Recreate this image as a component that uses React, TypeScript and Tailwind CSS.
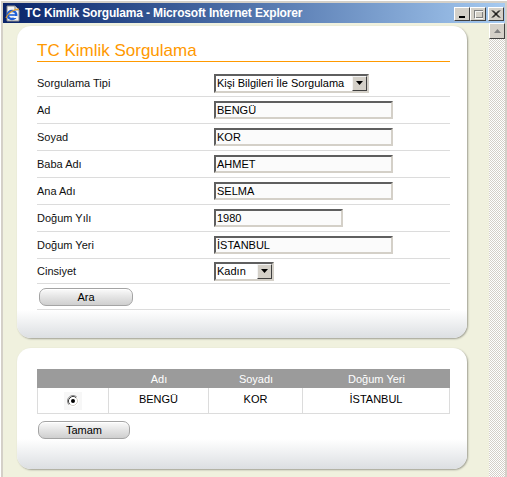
import React from "react";

function IEIcon() {
  return (
    <svg width="16" height="17" viewBox="0 0 16 17" className="shrink-0">
      <path d="M2 1h8l4 4v11H2z" fill="#f4f4f4" stroke="#8a8a8a" strokeWidth="1" />
      <path d="M10 1v4h4" fill="#dcdcdc" stroke="#8a8a8a" strokeWidth="1" />
      <ellipse cx="7" cy="10" rx="4.3" ry="4" fill="none" stroke="#1f5fd6" strokeWidth="2.4" />
      <rect x="3" y="9.2" width="8.5" height="1.6" fill="#1f5fd6" />
      <rect x="8.5" y="11" width="4" height="2" fill="#f4f4f4" />
      <path d="M1 13c2-5 8-9 13-9" fill="none" stroke="#f0a020" strokeWidth="1.2" />
    </svg>
  );
}

function WinBtn({ kind }: { kind: "min" | "max" | "close" }) {
  return (
    <div className="w-[16px] h-[14px] bg-[#d4d0c8] border border-t-white border-l-white border-b-[#404040] border-r-[#404040] flex items-center justify-center">
      {kind === "min" && (
        <svg width="10" height="9" viewBox="0 0 10 9">
          <rect x="2" y="6" width="6" height="2" fill="#000" />
        </svg>
      )}
      {kind === "max" && (
        <svg width="10" height="9" viewBox="0 0 10 9">
          <rect x="1.5" y="0.5" width="8" height="7" fill="none" stroke="#808080" />
          <rect x="1" y="1" width="9" height="1" fill="#808080" />
          <rect x="2.5" y="1.5" width="8" height="7" fill="none" stroke="#ffffff" strokeOpacity="0.9" />
        </svg>
      )}
      {kind === "close" && (
        <svg width="10" height="9" viewBox="0 0 10 9">
          <path d="M1 0.5L8 7.5M2 0.5L9 7.5M8 0.5L1 7.5M9 0.5L2 7.5" stroke="#000" strokeWidth="1" />
        </svg>
      )}
    </div>
  );
}

function Arrow() {
  return (
    <svg width="7" height="4" viewBox="0 0 7 4">
      <path d="M0 0h7L3.5 4z" fill="#000" />
    </svg>
  );
}

function Select({ value, w }: { value: string; w: string }) {
  return (
    <div
      className={`${w} h-[19px] flex bg-white border-2 border-t-[#5f5f5f] border-l-[#5f5f5f] border-b-[#d4d0c8] border-r-[#d4d0c8]`}
    >
      <div className="flex-1 pl-[1px] text-[11px] leading-[15px] text-black whitespace-nowrap overflow-hidden">
        {value}
      </div>
      <div className="w-[15px] h-[15px] bg-[#d4d0c8] border border-t-[#f4f4f4] border-l-[#f4f4f4] border-b-[#404040] border-r-[#404040] flex items-center justify-center">
        <Arrow />
      </div>
    </div>
  );
}

function Input({ value, w }: { value: string; w: string }) {
  return (
    <div
      className={`${w} h-[18px] bg-[#fbfbfb] border-2 border-t-[#5f5f5f] border-l-[#5f5f5f] border-b-[#d4d0c8] border-r-[#d4d0c8] pl-[1px] text-[11px] leading-[14px] text-black whitespace-nowrap`}
    >
      {value}
    </div>
  );
}

function Btn({ label, w }: { label: string; w: string }) {
  return (
    <div
      className={`${w} h-[18px] rounded-[7px] border border-[#a4a4a4] bg-gradient-to-b from-[#fbfbfb] via-[#e4e4e4] to-[#cfcfcf] shadow-[inset_0_1px_0_#ffffff] flex items-center justify-center text-[11px] leading-[14px] text-black`}
    >
      {label}
    </div>
  );
}

function Row({
  label,
  h,
  children,
}: {
  label: string;
  h: string;
  children: React.ReactNode;
}) {
  return (
    <div className={`${h} flex items-center border-b border-[#dcdcdc]`}>
      <div className="w-[177px] text-[11px] leading-[14px] text-[#111]">{label}</div>
      {children}
    </div>
  );
}

export default function App() {
  return (
    <div className="w-[507px] h-[477px] bg-[#d4d0c8] flex flex-col px-[2px] pt-[2px] overflow-hidden font-['Liberation_Sans',Arial,sans-serif] border-l border-t border-l-white border-t-white">
      {/* Title bar */}
      <div className="h-[20px] shrink-0 flex items-center bg-gradient-to-r from-[#0a246a] to-[#a6caf0] pl-[2px] pr-[1px]">
        <IEIcon />
        <span className="ml-[4px] text-white font-bold text-[12px] leading-[14px] tracking-[-0.15px] whitespace-nowrap">
          TC Kimlik Sorgulama - Microsoft Internet Explorer
        </span>
        <div className="ml-auto flex items-center mt-[2px]">
          <WinBtn kind="min" />
          <WinBtn kind="max" />
          <div className="w-[2px]" />
          <WinBtn kind="close" />
        </div>
      </div>

      {/* Body */}
      <div className="flex-1 flex min-h-0">
        <div className="flex-1 bg-[#f0f1de] pl-[14px] pt-[3px] flex flex-col">
          {/* Card 1 */}
          <div className="w-[450px] bg-white rounded-[14px] shadow-[1px_1px_2px_rgba(0,0,0,0.35)] flex flex-col overflow-hidden">
            <div className="pl-[20px] pr-[17px] pt-[15px]">
              <div className="text-[17px] leading-[20px] text-[#ff9900]">TC Kimlik Sorgulama</div>
              <div className="h-[1px] bg-[#ff9900]" />
              <div className="mt-[8px]">
                <Row label="Sorgulama Tipi" h="h-[27px]">
                  <Select value="Kişi Bilgileri İle Sorgulama" w="w-[155px]" />
                </Row>
                <Row label="Ad" h="h-[27px]">
                  <Input value="BENGÜ" w="w-[179px]" />
                </Row>
                <Row label="Soyad" h="h-[27px]">
                  <Input value="KOR" w="w-[179px]" />
                </Row>
                <Row label="Baba Adı" h="h-[27px]">
                  <Input value="AHMET" w="w-[179px]" />
                </Row>
                <Row label="Ana Adı" h="h-[27px]">
                  <Input value="SELMA" w="w-[179px]" />
                </Row>
                <Row label="Doğum Yılı" h="h-[27px]">
                  <Input value="1980" w="w-[129px]" />
                </Row>
                <Row label="Doğum Yeri" h="h-[27px]">
                  <Input value="İSTANBUL" w="w-[179px]" />
                </Row>
                <Row label="Cinsiyet" h="h-[25px]">
                  <Select value="Kadın" w="w-[60px]" />
                </Row>
                <div className="h-[26px] flex items-center border-b border-[#dcdcdc] pl-[2px]">
                  <Btn label="Ara" w="w-[94px]" />
                </div>
              </div>
            </div>
            <div className="h-[28px] bg-gradient-to-b from-white to-[#dcdfe2]" />
          </div>

          {/* Card 2 */}
          <div className="mt-[10px] w-[450px] bg-white rounded-[14px] shadow-[1px_1px_2px_rgba(0,0,0,0.35)] flex flex-col overflow-hidden">
            <div className="pl-[20px] pr-[17px] pt-[21px]">
              <div className="w-[413px]">
                <div className="h-[19px] flex bg-[#9b9b9b] text-white text-[11px] leading-[14px] items-center">
                  <div className="w-[72px]" />
                  <div className="w-[100px] text-center">Adı</div>
                  <div className="w-[94px] text-center">Soyadı</div>
                  <div className="flex-1 text-center">Doğum Yeri</div>
                </div>
                <div className="h-[26px] flex border-l border-r border-b border-[#dcdcdc] text-[11px] leading-[13px] text-black">
                  <div className="w-[71px] border-r border-[#dcdcdc] flex items-center justify-center">
                    <div className="w-[18px] h-[18px] bg-[#f7f7f7] flex items-center justify-center">
                      <svg width="12" height="12" viewBox="0 0 12 12">
                        <circle cx="6" cy="6" r="5.5" fill="#ffffff" />
                        <path d="M2.11 9.89A5.5 5.5 0 0 1 9.89 2.11" fill="none" stroke="#8a8a8a" strokeWidth="1" />
                        <path d="M2.82 9.18A4.5 4.5 0 0 1 9.18 2.82" fill="none" stroke="#404040" strokeWidth="1" />
                        <path d="M9.89 2.11A5.5 5.5 0 0 1 2.11 9.89" fill="none" stroke="#ffffff" strokeWidth="1" />
                        <path d="M9.18 2.82A4.5 4.5 0 0 1 2.82 9.18" fill="none" stroke="#d4d0c8" strokeWidth="1" />
                        <circle cx="6" cy="6" r="2" fill="#000" />
                      </svg>
                    </div>
                  </div>
                  <div className="w-[100px] border-r border-[#dcdcdc] text-center pt-[5px]">BENGÜ</div>
                  <div className="w-[94px] border-r border-[#dcdcdc] text-center pt-[5px]">KOR</div>
                  <div className="flex-1 text-center pt-[5px]">İSTANBUL</div>
                </div>
              </div>
              <div className="mt-[7px] pl-[1px]">
                <Btn label="Tamam" w="w-[92px]" />
              </div>
            </div>
            <div className="h-[30px] bg-gradient-to-b from-white to-[#dcdfe2]" />
          </div>
        </div>

        {/* Scrollbar */}
        <div className="w-[16px] bg-[image:repeating-conic-gradient(#ffffff_0_25%,#d4d0c8_0_50%)] bg-[length:2px_2px]">
          <div className="w-[16px] h-[16px] bg-[#d4d0c8] border border-t-white border-l-white border-b-[#404040] border-r-[#404040] flex items-center justify-center">
            <svg width="7" height="4" viewBox="0 0 7 4">
              <path d="M3.5 0L7 4H0z" fill="#808080" />
            </svg>
          </div>
        </div>
      </div>
    </div>
  );
}
